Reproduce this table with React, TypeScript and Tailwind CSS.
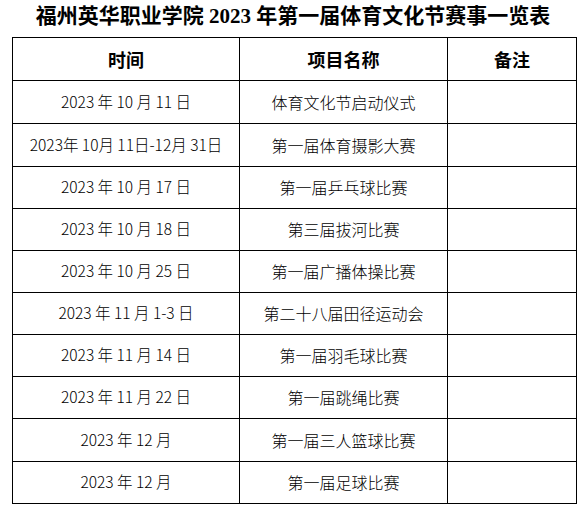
import React from "react";

const rows = [
  { time: "2023 年 10 月 11 日", name: "体育文化节启动仪式", h: "h-[43px]" },
  { time: "2023年 10月 11日-12月 31日", name: "第一届体育摄影大赛", h: "h-[43px]" },
  { time: "2023 年 10 月 17 日", name: "第一届乒乓球比赛", h: "h-[42px]" },
  { time: "2023 年 10 月 18 日", name: "第三届拔河比赛", h: "h-[42px]" },
  { time: "2023 年 10 月 25 日", name: "第一届广播体操比赛", h: "h-[42px]" },
  { time: "2023 年 11 月 1-3 日", name: "第二十八届田径运动会", h: "h-[42px]" },
  { time: "2023 年 11 月 14 日", name: "第一届羽毛球比赛", h: "h-[42px]" },
  { time: "2023 年 11 月 22 日", name: "第一届跳绳比赛", h: "h-[42px]" },
  { time: "2023 年 12 月", name: "第一届三人篮球比赛", h: "h-[43px]" },
  { time: "2023 年 12 月", name: "第一届足球比赛", h: "h-[42px]" },
];

const font = {
  fontFamily: '"Liberation Serif", "Noto Sans CJK SC", serif',
};

export default function App() {
  return (
    <div
      className="w-[586px] h-[511px] bg-white text-black"
      style={{ fontFamily: '"Noto Sans CJK SC", sans-serif' }}
    >
      <div
        className="h-[37px] flex items-center justify-center text-[21px] font-bold leading-none pb-[4px]"
        style={font}
      >
        福州英华职业学院 2023 年第一届体育文化节赛事一览表
      </div>
      <div className="ml-[12px] w-[565px] border-l border-t border-black grid grid-cols-[227px_208px_129px]">
        <div className="h-[43px] border-r border-b border-black flex items-center justify-center text-[18px] font-bold leading-none">
          时间
        </div>
        <div className="h-[43px] border-r border-b border-black flex items-center justify-center text-[18px] font-bold leading-none">
          项目名称
        </div>
        <div className="h-[43px] border-r border-b border-black flex items-center justify-center text-[18px] font-bold leading-none">
          备注
        </div>
        {rows.map((r, i) => (
          <React.Fragment key={i}>
            <div
              className={`${r.h} border-r border-b border-black flex items-center justify-center text-[15.5px] font-light leading-none whitespace-nowrap pb-[1px]`}
            >
              {r.time}
            </div>
            <div
              className={`${r.h} border-r border-b border-black flex items-center justify-center text-[16px] font-light leading-none pb-[1px]`}
            >
              {r.name}
            </div>
            <div className={`${r.h} border-r border-b border-black`} />
          </React.Fragment>
        ))}
      </div>
    </div>
  );
}
